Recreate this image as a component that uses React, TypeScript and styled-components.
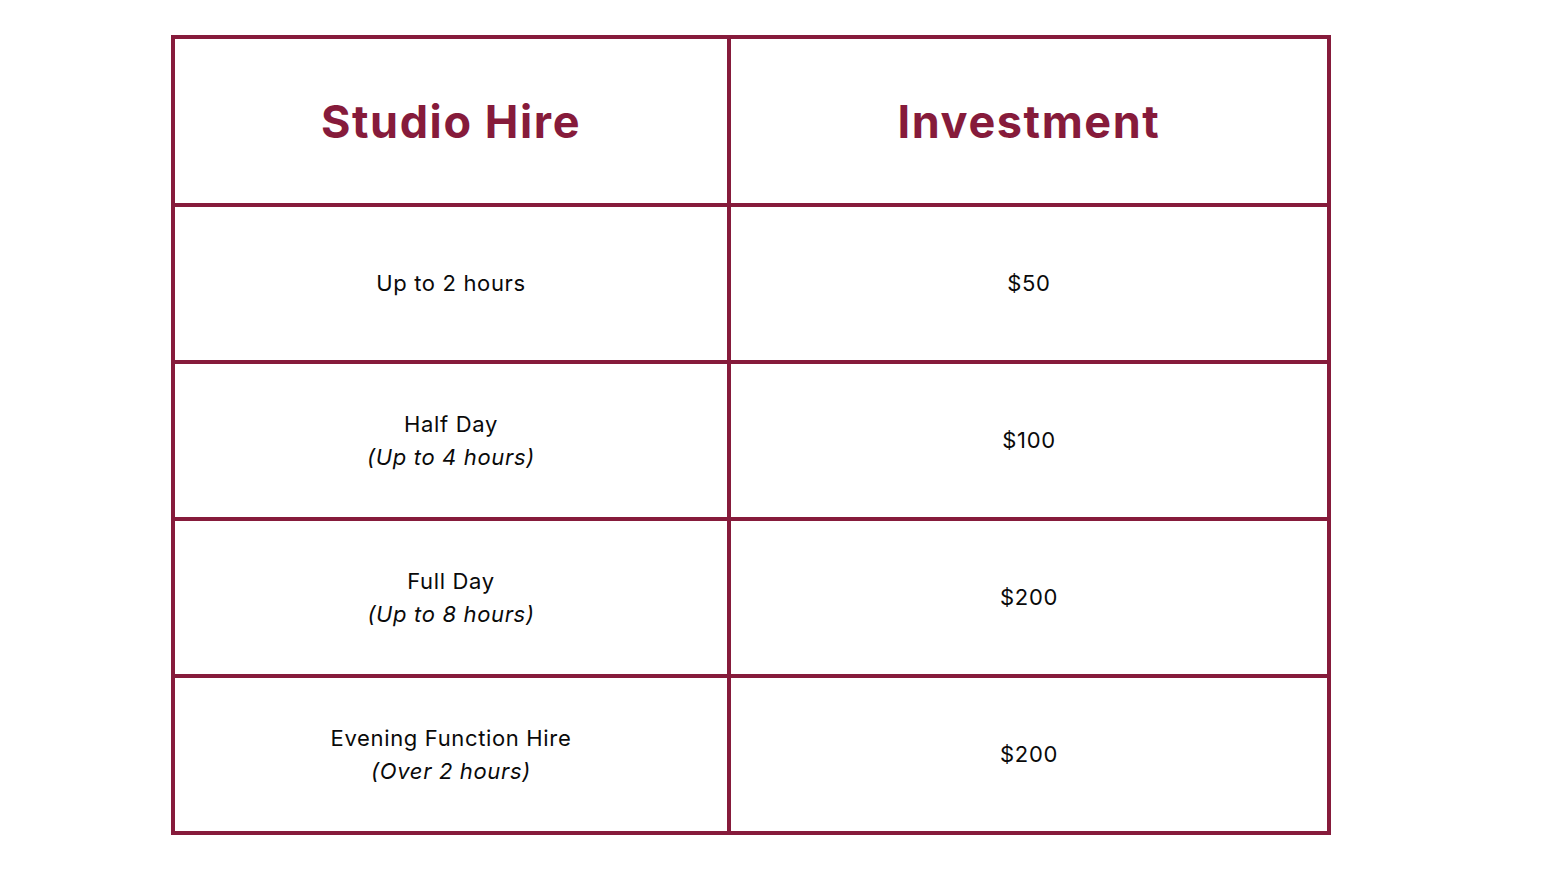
import React from "react";
import styled, { createGlobalStyle } from "styled-components";

const Global = createGlobalStyle`
  html, body { margin: 0; padding: 0; background: #ffffff; }
  body { font-family: Inter, "Noto Sans", sans-serif; }
`;

const Page = styled.div`
  width: 1556px;
  height: 875px;
  box-sizing: border-box;
  padding: 35px 0 0 171px;
`;

const Grid = styled.div`
  display: grid;
  grid-template-columns: 552px 596px;
  grid-template-rows: 164px repeat(4, 153px);
  gap: 4px;
  padding: 4px;
  width: 1160px;
  box-sizing: border-box;
  background: #861b3b;
`;

const HeadCell = styled.div`
  background: #ffffff;
  display: flex;
  align-items: center;
  justify-content: center;
  color: #861b3b;
  font-family: Inter, sans-serif;
  font-weight: 700;
  font-size: 45px;
  letter-spacing: 1.6px;
`;

const Cell = styled.div`
  background: #ffffff;
  display: flex;
  flex-direction: column;
  align-items: center;
  justify-content: center;
  text-align: center;
  color: #0a0a0a;
  font-family: Inter, sans-serif;
  font-size: 22px;
  letter-spacing: 0.65px;
  line-height: 33px;
`;

const Note = styled.div`
  font-style: italic;
`;

const rows = [
  { name: "Up to 2 hours", note: null, price: "$50" },
  { name: "Half Day", note: "(Up to 4 hours)", price: "$100" },
  { name: "Full Day", note: "(Up to 8 hours)", price: "$200" },
  { name: "Evening Function Hire", note: "(Over 2 hours)", price: "$200" },
];

export default function App() {
  return (
    <>
      <Global />
      <Page>
        <Grid>
          <HeadCell>Studio Hire</HeadCell>
          <HeadCell>Investment</HeadCell>
          {rows.map((r, i) => (
            <React.Fragment key={i}>
              <Cell>
                <div>{r.name}</div>
                {r.note && <Note>{r.note}</Note>}
              </Cell>
              <Cell>{r.price}</Cell>
            </React.Fragment>
          ))}
        </Grid>
      </Page>
    </>
  );
}
